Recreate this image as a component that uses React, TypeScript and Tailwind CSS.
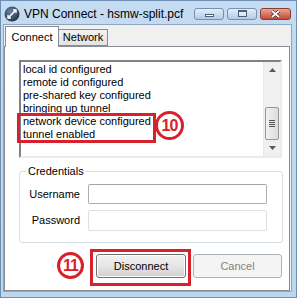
import { ReactNode } from 'react'

const logLines = [
  'local id configured',
  'remote id configured',
  'pre-shared key configured',
  'bringing up tunnel',
  'network device configured',
  'tunnel enabled',
]

export default function App() {
  return (
    <div
      className="relative w-[297px] h-[298px] flex flex-col overflow-hidden bg-gradient-to-b from-[#c4dbf1] to-[#bcd6ee] border border-[#6f8fb4]"
      style={{ fontFamily: '"Liberation Sans", Arial, sans-serif' }}
    >
      <TitleBar />

      <div className="flex-1 flex flex-col ml-[2px] mr-[4px] mb-[5px] bg-[#f0f0f0] border border-[#8fa6c0]">
        <div className="h-[21px] flex items-end pl-[1px] text-[11px] text-black">
          <div className="h-[21px] w-[54px] bg-white border border-b-0 border-[#898c95] flex items-center justify-center -mb-px relative z-10">
            Connect
          </div>
          <div className="h-[17px] w-[49px] bg-gradient-to-b from-[#f2f2f2] to-[#e3e3e3] border border-l-0 border-[#898c95] flex items-center justify-center">
            Network
          </div>
        </div>

        <div className="flex-1 bg-white border border-[#898c95] mr-[1px] pl-[14px] pt-[13px] flex flex-col text-[11px] text-black">
          <ListBox />

          <fieldset className="w-[264px] border border-[#d5dfe5] rounded-[3px] mt-[7px] pb-[11px]">
            <legend className="ml-[6px] px-[2px] leading-[13px]">Credentials</legend>
            <div className="grid grid-cols-[60px_179px] gap-x-[8px] gap-y-[6px] items-center pt-[6px]">
              <span className="text-right">Username</span>
              <div className="h-[20px] border border-[#abadb3] border-t-[#a0a4ab] rounded-[2px] bg-white" />
              <span className="text-right">Password</span>
              <div className="h-[21px] border border-[#dcdfe3] rounded-[2px] bg-white" />
            </div>
          </fieldset>

          <div className="w-[263px] flex justify-end gap-[7px] mt-[11px]">
            <button className="w-[90px] h-[24px] rounded-[3px] border border-[#707070] bg-gradient-to-b from-[#f2f2f2] via-[#e6e6e6] to-[#d0d0d0] text-[11px] text-black shadow-[inset_0_0_0_1px_#fcfcfc]">
              Disconnect
            </button>
            <button className="w-[89px] h-[24px] rounded-[3px] border border-[#adb2b5] bg-[#f4f4f4] text-[11px] text-[#838383]">
              Cancel
            </button>
          </div>
        </div>
      </div>

      {/* annotations */}
      <div className="absolute left-[16px] top-[112px] w-[139px] h-[30px] border-[3px] border-[#d9212b]" />
      <Badge className="left-[154px] top-[110px] w-[29px] h-[29px]">10</Badge>
      <div className="absolute left-[89px] top-[248px] w-[101px] h-[37px] border-[3px] border-[#d9212b]" />
      <Badge className="left-[56px] top-[251px] w-[27px] h-[27px]">11</Badge>
    </div>
  )
}

function Badge({ className, children }: { className: string; children: ReactNode }) {
  return (
    <div
      className={`absolute rounded-full border-[3px] border-[#d9212b] bg-white flex items-center justify-center text-[16px] font-bold text-[#d9212b] tracking-[-1px] ${className}`}
    >
      {children}
    </div>
  )
}

function TitleBar() {
  return (
    <div className="h-[23px] flex items-center pl-[3px] pr-[5px] pt-[2px]">
      <svg width="16" height="16" viewBox="0 0 16 16" className="shrink-0">
        <defs>
          <radialGradient id="g" cx="0.4" cy="0.35" r="0.7">
            <stop offset="0" stopColor="#6f86a8" />
            <stop offset="1" stopColor="#1e2d48" />
          </radialGradient>
        </defs>
        <circle cx="8" cy="8" r="7.5" fill="url(#g)" />
        <path d="M4 12 L12 4" stroke="#fff" strokeWidth="1.6" />
        <path d="M9 4 L12 4 L12 7" fill="none" stroke="#fff" strokeWidth="1.4" />
        <path d="M7 12 L4 12 L4 9" fill="none" stroke="#fff" strokeWidth="1.4" />
      </svg>
      <span className="ml-[4px] shrink-0 whitespace-nowrap text-[12px] text-black leading-none">VPN Connect - hsmw-split.pcf</span>
      <div className="ml-auto shrink-0 flex gap-[3px]">
        <div className="w-[30px] h-[12px] rounded-[3px] border border-[#7890ae] bg-gradient-to-b from-[#e3eef9] to-[#b3cbe4] flex items-end justify-center pb-[2px]">
          <div className="w-[9px] h-[3px] bg-white border border-[#4b5f7a]" />
        </div>
        <div className="w-[30px] h-[12px] rounded-[3px] border border-[#7890ae] bg-gradient-to-b from-[#e3eef9] to-[#b3cbe4] flex items-center justify-center">
          <div className="w-[9px] h-[7px] border border-[#4b5f7a] border-t-2 bg-white/40" />
        </div>
        <div className="w-[31px] h-[12px] rounded-[3px] border border-[#8a3b32] bg-gradient-to-b from-[#e8a594] to-[#c4483a] flex items-center justify-center">
          <svg width="11" height="8" viewBox="0 0 11 8">
            <path d="M2 1 L9 7 M9 1 L2 7" stroke="#3b1a14" strokeWidth="3" />
            <path d="M2 1 L9 7 M9 1 L2 7" stroke="#fff" strokeWidth="1.8" />
          </svg>
        </div>
      </div>
    </div>
  )
}

function ListBox() {
  return (
    <div className="w-[263px] h-[98px] flex border-2 border-t-[#828282] border-l-[#828282] border-r-[#ececec] border-b-[#ececec] bg-white">
      <div className="flex-1 pl-[2px] pt-[1px] leading-[13px]">
        {logLines.map((line) => (
          <div key={line} className="h-[13px] whitespace-nowrap">{line}</div>
        ))}
      </div>
      <div className="w-[17px] bg-[#f0f0f0] border-l border-[#e8e8e8] flex flex-col items-center">
        <div className="h-[17px] flex items-center justify-center">
          <svg width="7" height="4" viewBox="0 0 7 4"><path d="M0 4 L3.5 0 L7 4Z" fill="#5a5a5a" /></svg>
        </div>
        <div className="flex-1 w-full flex flex-col">
          <div className="h-[29px]" />
          <div className="h-[33px] mx-[1px] rounded-[2px] border border-[#979797] bg-gradient-to-r from-[#f2f2f2] to-[#dcdcdc] flex flex-col items-center justify-center gap-[1px]">
            <div className="w-[6px] h-px bg-[#555]" />
            <div className="w-[6px] h-px bg-[#555]" />
            <div className="w-[6px] h-px bg-[#555]" />
            <div className="w-[6px] h-px bg-[#555]" />
          </div>
        </div>
        <div className="h-[17px] flex items-center justify-center">
          <svg width="7" height="4" viewBox="0 0 7 4"><path d="M0 0 L3.5 4 L7 0Z" fill="#5a5a5a" /></svg>
        </div>
      </div>
    </div>
  )
}
